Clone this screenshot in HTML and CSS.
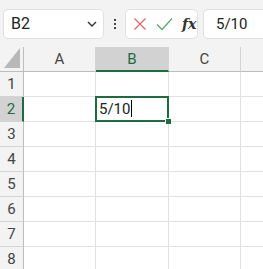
FILE: index.html
```html
<!DOCTYPE html>
<html lang="ja">
<head>
    <meta charset="UTF-8">
    <title>Book1</title>
    <link rel="stylesheet" href="styles.css">
</head>
<body>

<div class="toolbar">
    <div class="namebox">
        <span class="namebox-text">B2</span>
        <svg class="chevron" width="10" height="6" viewBox="0 0 10 6"><path d="M1 1 L5 5 L9 1" fill="none" stroke="#333" stroke-width="1.4"/></svg>
    </div>
    <div class="dots">
        <span></span><span></span><span></span>
    </div>
    <div class="fx-buttons">
        <svg width="14" height="14" viewBox="0 0 14 14"><path d="M1.5 1.5 L12.5 12.5 M12.5 1.5 L1.5 12.5" stroke="#e06a6a" stroke-width="1.3" fill="none"/></svg>
        <svg width="17" height="14" viewBox="0 0 17 14"><path d="M1 7.5 L6 12.5 L16 1.5" stroke="#5fa872" stroke-width="1.3" fill="none"/></svg>
        <span class="fx">fx</span>
    </div>
    <div class="formula">5/10</div>
</div>

<div class="sheet">
    <div class="corner">
        <svg width="16" height="20" viewBox="0 0 16 20"><polygon points="16,0 16,20 0,20" fill="#b8b8b8"/></svg>
    </div>
    <div class="colhead">A</div>
    <div class="colhead active">B</div>
    <div class="colhead">C</div>
    <div class="colhead"></div>

    <div class="rowhead">1</div><div class="cell"></div><div class="cell"></div><div class="cell"></div><div class="cell"></div>
    <div class="rowhead active">2</div><div class="cell"></div><div class="cell selected">5/10<span class="caret"></span></div><div class="cell"></div><div class="cell"></div>
    <div class="rowhead">3</div><div class="cell"></div><div class="cell"></div><div class="cell"></div><div class="cell"></div>
    <div class="rowhead">4</div><div class="cell"></div><div class="cell"></div><div class="cell"></div><div class="cell"></div>
    <div class="rowhead">5</div><div class="cell"></div><div class="cell"></div><div class="cell"></div><div class="cell"></div>
    <div class="rowhead">6</div><div class="cell"></div><div class="cell"></div><div class="cell"></div><div class="cell"></div>
    <div class="rowhead">7</div><div class="cell"></div><div class="cell"></div><div class="cell"></div><div class="cell"></div>
    <div class="rowhead">8</div><div class="cell"></div><div class="cell"></div><div class="cell"></div><div class="cell"></div>
</div>

</body>
</html>
```

FILE: styles.css
```css
body {
    margin: 0;
    font-family: Roboto, "Noto Sans", sans-serif;
    background-color: #ffffff;
    overflow: hidden;
    width: 263px;
    height: 269px;
}
.toolbar {
    background-color: #f3f3f3;
    width: 263px;
    height: 47px;
    display: flex;
    align-items: center;
    padding-left: 3px;
    box-sizing: border-box;
    overflow: hidden;
    white-space: nowrap;
}
.namebox {
    width: 101px;
    height: 30px;
    background-color: #ffffff;
    border: 1px solid #e1e1e1;
    border-radius: 5px;
    box-sizing: border-box;
    display: flex;
    align-items: center;
    justify-content: space-between;
    padding: 0 6px 0 7px;
    flex-shrink: 0;
}
.namebox-text {
    font-size: 16px;
    color: #222;
}
.dots {
    width: 21px;
    display: flex;
    flex-direction: column;
    align-items: center;
    gap: 2px;
    flex-shrink: 0;
}
.dots span {
    width: 2px;
    height: 2px;
    background-color: #444;
}
.fx-buttons {
    width: 73px;
    height: 30px;
    background-color: #ffffff;
    border: 1px solid #e1e1e1;
    border-radius: 5px;
    box-sizing: border-box;
    display: flex;
    align-items: center;
    gap: 9px;
    padding-left: 7px;
    flex-shrink: 0;
}
.fx {
    font-family: "DejaVu Serif", "Liberation Serif", serif;
    font-style: italic;
    font-weight: bold;
    font-size: 14px;
    color: #333;
}
.formula {
    margin-left: 5px;
    width: 120px;
    height: 30px;
    background-color: #ffffff;
    border: 1px solid #e1e1e1;
    border-radius: 5px;
    box-sizing: border-box;
    padding-left: 12px;
    font-size: 15px;
    line-height: 28px;
    color: #222;
    flex-shrink: 0;
}
.sheet {
    width: 263px;
    overflow: hidden;
    display: grid;
    grid-template-columns: 24px 72px 73px 72px 72px;
    grid-auto-rows: 25px;
}
.corner,
.colhead,
.rowhead,
.cell {
    box-sizing: border-box;
    border-right: 1px solid #e1e1e1;
    border-bottom: 1px solid #e1e1e1;
}
.corner {
    background-color: #f3f3f3;
    border-right: 1px solid #bdbdbd;
    border-bottom: 1px solid #bdbdbd;
    display: flex;
    justify-content: flex-end;
    align-items: flex-end;
    padding: 0 3px 3px 0;
}
.corner svg {
    display: block;
}
.colhead {
    background-color: #f3f3f3;
    border-bottom: 1px solid #bdbdbd;
    border-right: 1px solid #d4d4d4;
    text-align: center;
    font-size: 15px;
    line-height: 24px;
    color: #444;
}
.colhead.active {
    background-color: #d2d2d2;
    color: #1e6b41;
    border-bottom: 2px solid #1e6b41;
}
.rowhead {
    background-color: #f3f3f3;
    border-right: 1px solid #bdbdbd;
    border-bottom: 1px solid #d4d4d4;
    text-align: center;
    font-size: 15px;
    line-height: 24px;
    color: #444;
}
.rowhead.active {
    background-color: #d2d2d2;
    color: #1e6b41;
    border-right: 2px solid #1e6b41;
}
.cell {
    font-size: 15px;
    line-height: 24px;
    color: #222;
    padding-left: 3px;
}
.cell.selected {
    position: relative;
}
.cell.selected::after {
    content: "";
    position: absolute;
    left: -1px;
    top: -1px;
    right: -1px;
    bottom: -1px;
    border: 2px solid #1e6b41;
}
.cell.selected::before {
    content: "";
    position: absolute;
    right: -3px;
    bottom: -3px;
    width: 5px;
    height: 5px;
    background-color: #1e6b41;
    border-top: 1px solid #ffffff;
    border-left: 1px solid #ffffff;
    z-index: 1;
}
.caret {
    display: inline-block;
    width: 1px;
    height: 17px;
    background-color: #000;
    vertical-align: -3px;
    margin-left: 1px;
}
```
